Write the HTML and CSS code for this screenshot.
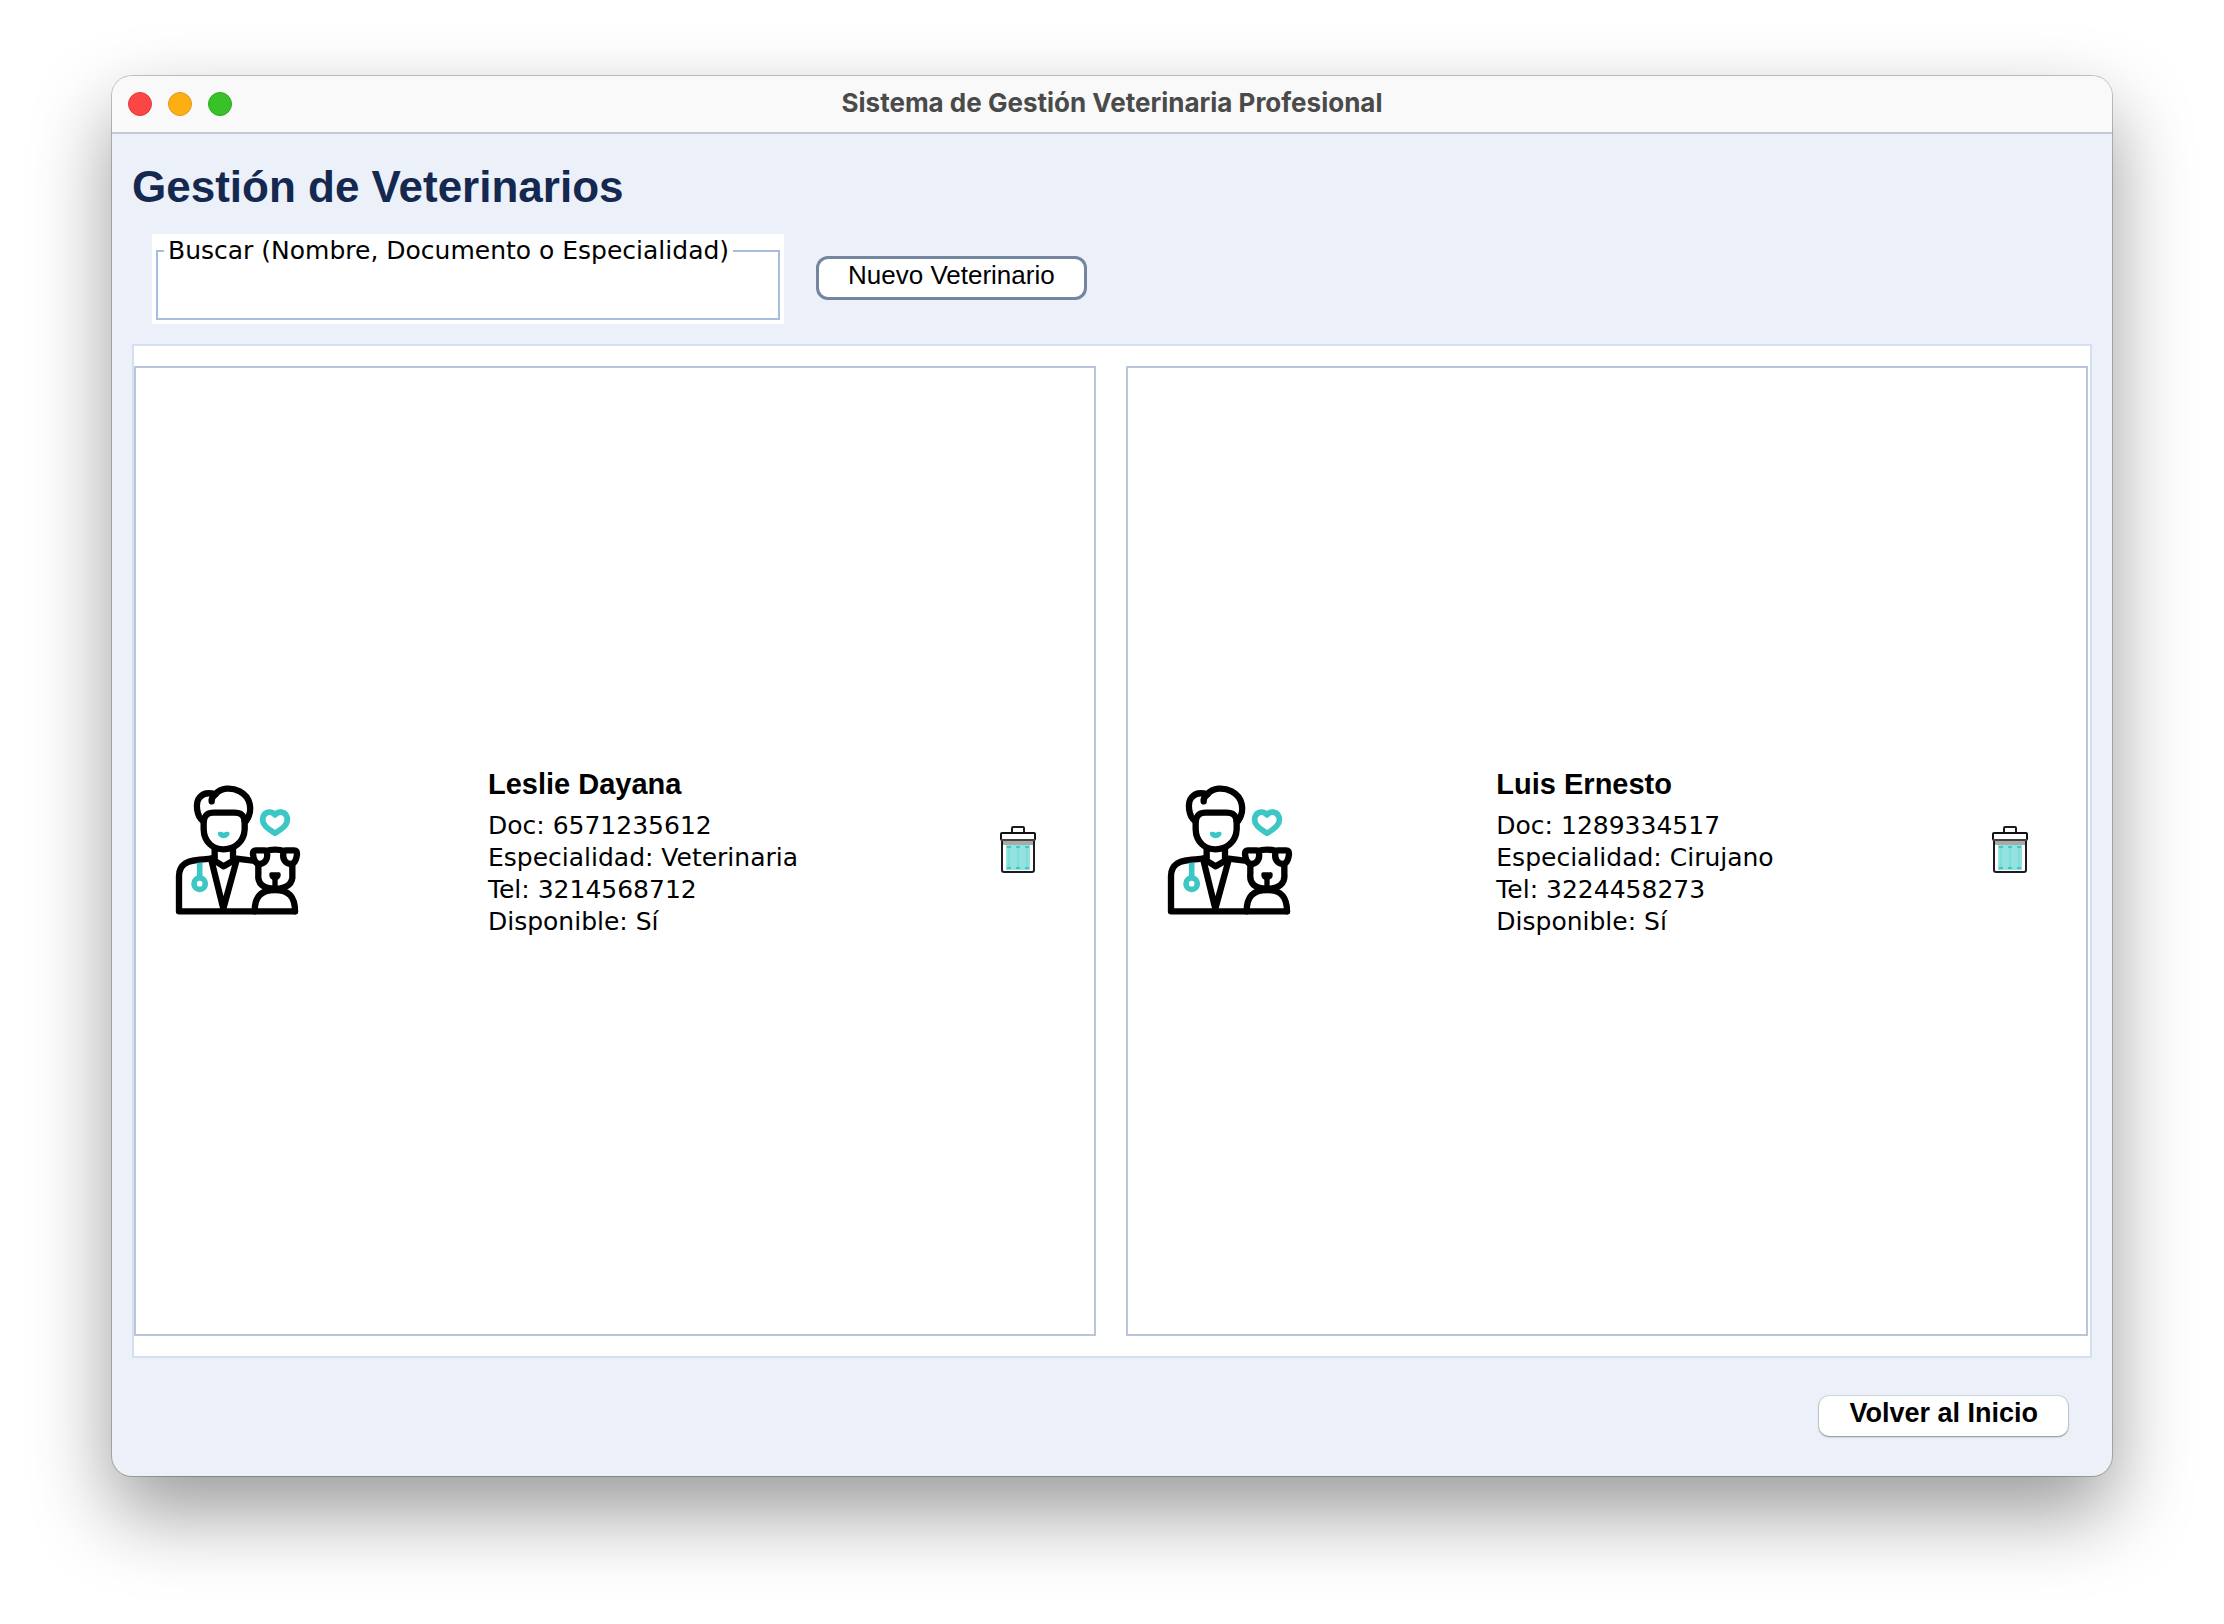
FILE: index.html
```html
<!DOCTYPE html>
<html lang="es">
<head>
<meta charset="utf-8">
<meta name="viewport" content="width=device-width, initial-scale=1">
<title>Sistema de Gestión Veterinaria Profesional</title>
<link rel="stylesheet" href="styles.css">
</head>
<body>
<svg class="sprite" aria-hidden="true">
  <symbol id="vet" viewBox="42 51 384 384" overflow="visible">
    <g fill="none" stroke="#000" stroke-width="19" stroke-linejoin="round" stroke-linecap="round">
      <path d="M130 154C109 140 105 97 119 82C131 68 150 68 166 73C183 53 213 51 239 64C272 81 280 121 259 152"/>
      <path d="M155 94C154 85 159 78 166 73"/>
      <path d="M131 154C134 134 144 128 161 128H223C241 128 252 134 254 154"/>
      <path d="M131 152V178C132 217 160 238 191 238S252 217 254 178V152"/>
      <path d="M164 238V264M219 238V264"/>
      <path d="M154 266C115 269 90 270 75 281C62 290 57 301 57 318V424H405"/>
      <path d="M154 266L191 289L230 266L278 272"/>
      <path d="M154 270L190 416L230 270"/>
      <path d="M284 424C284 381 302 360 345 360S405 381 405 424"/>
      <path d="M319 243C328 239 337 239 345 239S362 239 371 243"/>
      <path d="M312 241H288Q278 241 279 252C281 271 288 282 300 282C316 280 324 265 321 250Q319 241 312 241Z"/>
      <path d="M379 241H402Q412 241 411 252C409 271 402 282 391 282C375 280 367 265 370 250Q372 241 379 241Z"/>
      <path d="M295 284V312C292 340 308 356 345 356S400 340 397 312V284"/>
    </g>
    <path d="M345 324V354" stroke="#000" stroke-width="16"/>
    <path d="M333 307H357Q362 307 362 312V317C361 325 354 330 345 331C336 330 329 325 328 317V312Q328 307 333 307Z"/>
    <path d="M175 186Q183 183 191 188Q199 183 207 186Q211 191 206 198Q191 212 176 198Q171 191 175 186Z" fill="#3dc6c6"/>
    <g fill="none" stroke="#3dc6c6" stroke-width="17">
      <path d="M119 278V322"/>
      <circle cx="119" cy="341" r="17"/>
      <path stroke-linejoin="round" d="M345 135C336 122 315 123 309 141C303 162 321 175 345 190C369 175 387 162 381 141C375 123 354 122 345 135Z"/>
    </g>
  </symbol>
  <symbol id="trash" viewBox="0 0 48 48">
    <path d="M8 15H40V45Q40 47 38 47H10Q8 47 8 45Z" fill="#fff" stroke="#1c1c1e" stroke-width="2"/>
    <path d="M9 16H39V20H9Z" fill="#aaa"/>
    <path d="M12 20H36V45H12Z" fill="#93e2e0"/>
    <path d="M15 23V42M24 23V42M33 23V42" stroke="#7fdcd9" stroke-width="2"/>
    <path d="M13 22H17M22 22H26M31 22H35M13 43H17M22 43H26M31 43H35" stroke="#3ec9c2" stroke-width="2"/>
    <path d="M18 8V3Q18 2 19 2H29Q30 2 30 3V8" fill="#fff" stroke="#1c1c1e" stroke-width="2"/>
    <rect x="7" y="8" width="34" height="7" rx="1" fill="#fff" stroke="#111" stroke-width="2"/>
    <path d="M7 15H41" stroke="#444" stroke-width="2"/>
  </symbol>
</svg>

<div class="window">
  <header class="titlebar">
    <div class="controls">
      <button class="control close" type="button" aria-label="Cerrar"></button>
      <button class="control minimize" type="button" aria-label="Minimizar"></button>
      <button class="control maximize" type="button" aria-label="Maximizar"></button>
    </div>
    <div class="window-title">Sistema de Gestión Veterinaria Profesional</div>
  </header>

  <main class="content">
    <h1 class="heading">Gestión de Veterinarios</h1>

    <div class="toolbar">
      <div class="search">
        <fieldset class="search-frame">
          <legend class="search-legend"><label for="buscar">Buscar (Nombre, Documento o Especialidad)</label></legend>
          <input class="search-input" id="buscar" type="text">
        </fieldset>
      </div>
      <button class="new-button" type="button">Nuevo Veterinario</button>
    </div>

    <div class="list">
      <article class="card">
        <svg class="vet-icon" aria-hidden="true"><use href="#vet"/></svg>
        <div class="info">
          <h2 class="name">Leslie Dayana</h2>
          <p class="line">Doc: 6571235612</p>
          <p class="line">Especialidad: Veterinaria</p>
          <p class="line">Tel: 3214568712</p>
          <p class="line">Disponible: Sí</p>
        </div>
        <button class="delete" type="button" aria-label="Eliminar a Leslie Dayana"><svg class="trash-icon" aria-hidden="true"><use href="#trash"/></svg></button>
      </article>
      <article class="card">
        <svg class="vet-icon" aria-hidden="true"><use href="#vet"/></svg>
        <div class="info">
          <h2 class="name">Luis Ernesto</h2>
          <p class="line">Doc: 1289334517</p>
          <p class="line">Especialidad: Cirujano</p>
          <p class="line">Tel: 3224458273</p>
          <p class="line">Disponible: Sí</p>
        </div>
        <button class="delete" type="button" aria-label="Eliminar a Luis Ernesto"><svg class="trash-icon" aria-hidden="true"><use href="#trash"/></svg></button>
      </article>
    </div>

    <footer class="footer">
      <button class="back-button" type="button">Volver al Inicio</button>
    </footer>
  </main>
</div>
</body>
</html>
```

FILE: styles.css
```css
* {
  box-sizing: border-box;
}

body {
  margin: 0;
  min-height: 100vh;
  padding: 76px 112px 148px;
  display: flex;
  background: #fff;
  color: #000;
  font: 25px/32px "Lucida Grande", "DejaVu Sans", sans-serif;
}

button,
input {
  font: inherit;
  color: inherit;
}

.sprite {
  position: absolute;
  width: 0;
  height: 0;
}

.window {
  flex: 1;
  min-width: 0;
  display: flex;
  flex-direction: column;
  overflow: hidden;
  border-radius: 20px;
  background: #ecf1f9;
  box-shadow: 0 0 0 1px rgba(0, 0, 0, 0.22), 0 36px 80px rgba(0, 0, 0, 0.4);
}

.titlebar {
  display: grid;
  grid-template-columns: 1fr auto 1fr;
  align-items: center;
  height: 58px;
  padding: 0 16px;
  border-bottom: 2px solid #c4c8d0;
  background: #f9f9f9;
}

.controls {
  display: flex;
  gap: 16px;
}

.control {
  width: 24px;
  height: 24px;
  padding: 0;
  border: 1px solid;
  border-radius: 50%;
}

.close {
  border-color: #e2393b;
  background: #fb4646;
}

.minimize {
  border-color: #e09a14;
  background: #fdae14;
}

.maximize {
  border-color: #2ca81d;
  background: #38c227;
}

.window-title {
  padding-bottom: 2px;
  color: #4a4a4a;
  font-family: Inter, sans-serif;
  font-size: 26px;
  font-weight: 700;
}

.content {
  flex: 1;
  display: flex;
  flex-direction: column;
  padding: 20px;
}

.heading {
  margin: 0;
  color: #142850;
  font: bold 44px/66px "Liberation Sans", sans-serif;
}

.toolbar {
  display: flex;
  align-items: center;
  gap: 32px;
  margin: 14px 20px 20px;
}

.search {
  width: 632px;
  height: 90px;
  padding: 0 4px 4px;
  background: #fff;
}

.search-frame {
  min-width: 0;
  height: 86px;
  margin: 0;
  padding: 0 6px;
  border: 2px solid #a6bddf;
}

.search-legend {
  padding: 1px 4px;
}

.search-input {
  display: block;
  width: 100%;
  height: 40px;
  border: 0;
  outline: 0;
  background: transparent;
}

.new-button {
  height: 44px;
  margin-bottom: 2px;
  padding: 0 29px 6px;
  border: 3px solid #72869f;
  border-radius: 12px;
  background: #fff;
  font: 26px/30px "Liberation Sans", sans-serif;
}

.list {
  flex: 1;
  display: grid;
  grid-template-columns: 1fr 1fr;
  gap: 30px;
  padding: 20px 2px 20px 0;
  border: 2px solid #d5e0ef;
  background: #fff;
}

.card {
  display: flex;
  align-items: center;
  justify-content: space-between;
  padding: 0 42px 0 38px;
  border: 2px solid #b9c5db;
}

.vet-icon {
  width: 128px;
  height: 128px;
  overflow: visible;
}

.info {
  padding-bottom: 2px;
}

.name {
  margin: 0 0 4px;
  font: bold 29px/44px "Liberation Sans", sans-serif;
}

.line {
  margin: 0;
}

.delete {
  display: flex;
  padding: 8px 10px 12px;
  border: 0;
  background: none;
}

.trash-icon {
  width: 48px;
  height: 48px;
}

.footer {
  display: flex;
  justify-content: flex-end;
  padding: 38px 24px 20px;
}

.back-button {
  height: 40px;
  padding: 0 30px 6px;
  border: 0;
  border-radius: 10px;
  background: #fff;
  box-shadow: 0 0 0 1px rgba(0, 0, 0, 0.1), 0 1px 2px rgba(0, 0, 0, 0.35);
  font: bold 27px/30px "Liberation Sans", sans-serif;
}
```
